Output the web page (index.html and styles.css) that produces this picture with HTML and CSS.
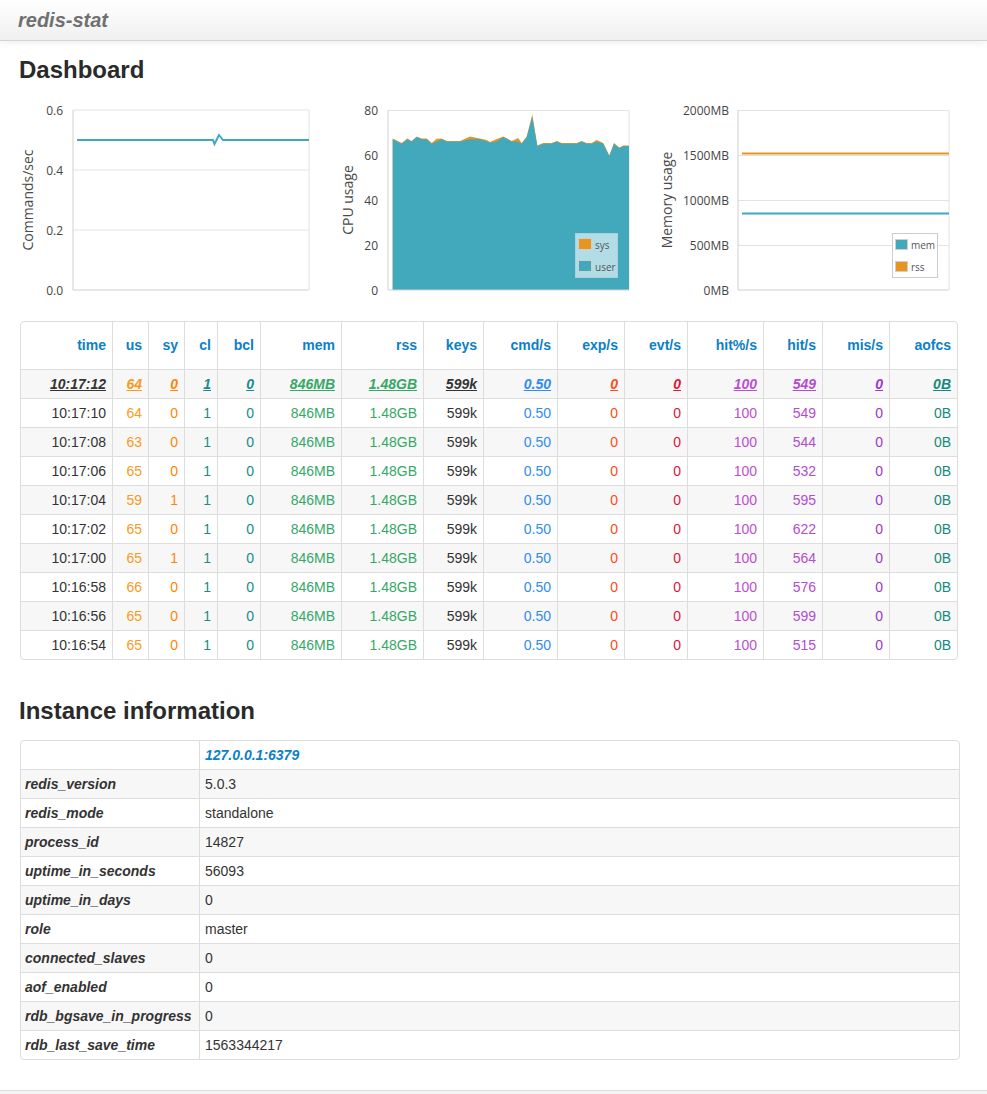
FILE: index.html
```html
<!DOCTYPE html>
<html lang="en">
<head>
<meta charset="utf-8">
<title>redis-stat</title>
<link rel="stylesheet" href="styles.css">
</head>
<body>
<header class="topbar">
  <span class="brand">redis-stat</span>
</header>

<main class="container">
  <h2 class="section-title">Dashboard</h2>

  <div class="charts">
    <svg class="chart chart-a" width="310" height="200" viewBox="20 96 310 200">
      <g class="grid">
        <line x1="73" y1="110" x2="309" y2="110"/>
        <line x1="73" y1="170" x2="309" y2="170"/>
        <line x1="73" y1="230" x2="309" y2="230"/>
        <line x1="309" y1="110" x2="309" y2="290"/>
      </g>
      <g class="axis">
        <line x1="73" y1="110" x2="73" y2="290"/>
        <line x1="73" y1="290" x2="309" y2="290"/>
      </g>
      <g class="ticks">
        <text x="63" y="110">0.6</text>
        <text x="63" y="170">0.4</text>
        <text x="63" y="230">0.2</text>
        <text x="63" y="290">0.0</text>
      </g>
      <text class="axis-title" transform="translate(33 200) rotate(-90)">Commands/sec</text>
      <polyline class="series-teal" points="77,140 213,140 214.5,144 219,135 223,140 309,140"/>
    </svg>

    <svg class="chart chart-b" width="320" height="200" viewBox="330 96 320 200">
      <g class="grid">
        <line x1="388" y1="110.5" x2="629" y2="110.5"/>
        <line x1="629" y1="110.5" x2="629" y2="290"/>
      </g>
      <polygon class="area-orange" points="392.7,138.6 401.7,143.1 407.3,138.6 411.7,140.9 416.7,136.4 421.7,138.6 426.7,138.6 431.7,143.1 436.7,138.7 441.7,138.6 446.7,140.9 460,140.9 470,136.5 480,138.6 486.7,140 490,142 496.7,139 503.3,136.4 511.7,140.9 518.3,138 521.7,143.1 526.7,136.4 532.3,114.6 537.3,145.4 543.3,143.1 551.7,143.1 556.7,140.9 561.7,143.1 576.7,143.1 581.7,140.9 586.7,143.1 591.7,143.1 596.7,140 603.3,143.1 609.3,155.5 614,143.1 619.3,147.6 623.3,145.4 629,145.4 629,290 392.7,290"/>
      <polygon class="area-teal" points="392.7,139.25 401.7,143.75 407.3,139.25 411.7,141.5 416.7,137 421.7,139.25 426.7,139.25 431.7,143.75 436.7,141.5 441.7,139.25 446.7,141.5 460,141.5 470,139.25 480,139.25 490,142.6 496.7,141.5 503.3,137 511.7,141.5 518.3,141.5 521.7,143.75 526.7,137 532.3,116.75 537.3,146 543.3,143.75 551.7,143.75 556.7,141.5 561.7,143.75 576.7,143.75 581.7,141.5 586.7,143.75 591.7,143.75 596.7,141.5 603.3,143.75 609.3,156.1 614,143.75 619.3,148.25 623.3,146 629,146 629,290 392.7,290"/>
      <g class="axis">
        <line x1="388" y1="110.5" x2="388" y2="290"/>
        <line x1="388" y1="290" x2="629" y2="290"/>
      </g>
      <g class="ticks">
        <text x="378" y="110.5">80</text>
        <text x="378" y="155.5">60</text>
        <text x="378" y="200.5">40</text>
        <text x="378" y="245">20</text>
        <text x="378" y="290">0</text>
      </g>
      <text class="axis-title" transform="translate(353 200) rotate(-90)">CPU usage</text>
      <g class="legend">
        <rect class="legend-box legend-box-tint" x="575.5" y="233.5" width="42" height="44"/>
        <rect class="swatch swatch-orange" x="578.5" y="238.5" width="13" height="11"/>
        <text x="595" y="244.5">sys</text>
        <rect class="swatch swatch-teal" x="578.5" y="260.5" width="13" height="11"/>
        <text x="595" y="266.5">user</text>
      </g>
    </svg>

    <svg class="chart chart-c" width="317" height="200" viewBox="650 96 317 200">
      <g class="grid">
        <line x1="738" y1="110.5" x2="949" y2="110.5"/>
        <line x1="738" y1="155.5" x2="949" y2="155.5"/>
        <line x1="738" y1="200.5" x2="949" y2="200.5"/>
        <line x1="738" y1="245.5" x2="949" y2="245.5"/>
        <line x1="949" y1="110.5" x2="949" y2="290"/>
      </g>
      <g class="axis">
        <line x1="738" y1="110.5" x2="738" y2="290"/>
        <line x1="738" y1="290" x2="949" y2="290"/>
      </g>
      <g class="ticks">
        <text x="729" y="110.5">2000MB</text>
        <text x="729" y="155.5">1500MB</text>
        <text x="729" y="200.5">1000MB</text>
        <text x="729" y="245.5">500MB</text>
        <text x="729" y="290">0MB</text>
      </g>
      <text class="axis-title" transform="translate(672 200) rotate(-90)">Memory usage</text>
      <line class="series-orange" x1="742" y1="153.5" x2="949" y2="153.5"/>
      <line class="series-teal" x1="742" y1="213.5" x2="949" y2="213.5"/>
      <g class="legend">
        <rect class="legend-box" x="892.5" y="233.5" width="45" height="44"/>
        <rect class="swatch swatch-teal" x="895.5" y="239.5" width="12" height="10"/>
        <text x="911" y="245">mem</text>
        <rect class="swatch swatch-orange" x="895.5" y="261.5" width="12" height="10"/>
        <text x="911" y="267">rss</text>
      </g>
    </svg>
  </div>

  <table class="grid-table stats">
    <colgroup>
      <col class="w-time"><col class="w-us"><col class="w-sy"><col class="w-cl"><col class="w-bcl">
      <col class="w-mem"><col class="w-rss"><col class="w-keys"><col class="w-cmd"><col class="w-exp">
      <col class="w-evt"><col class="w-hitp"><col class="w-hit"><col class="w-mis"><col class="w-aof">
    </colgroup>
    <thead>
      <tr>
        <th>time</th><th>us</th><th>sy</th><th>cl</th><th>bcl</th><th>mem</th><th>rss</th><th>keys</th>
        <th>cmd/s</th><th>exp/s</th><th>evt/s</th><th>hit%/s</th><th>hit/s</th><th>mis/s</th><th>aofcs</th>
      </tr>
    </thead>
    <tbody>
      <tr class="latest"><td>10:17:12</td><td>64</td><td>0</td><td>1</td><td>0</td><td>846MB</td><td>1.48GB</td><td>599k</td><td>0.50</td><td>0</td><td>0</td><td>100</td><td>549</td><td>0</td><td>0B</td></tr>
      <tr><td>10:17:10</td><td>64</td><td>0</td><td>1</td><td>0</td><td>846MB</td><td>1.48GB</td><td>599k</td><td>0.50</td><td>0</td><td>0</td><td>100</td><td>549</td><td>0</td><td>0B</td></tr>
      <tr><td>10:17:08</td><td>63</td><td>0</td><td>1</td><td>0</td><td>846MB</td><td>1.48GB</td><td>599k</td><td>0.50</td><td>0</td><td>0</td><td>100</td><td>544</td><td>0</td><td>0B</td></tr>
      <tr><td>10:17:06</td><td>65</td><td>0</td><td>1</td><td>0</td><td>846MB</td><td>1.48GB</td><td>599k</td><td>0.50</td><td>0</td><td>0</td><td>100</td><td>532</td><td>0</td><td>0B</td></tr>
      <tr><td>10:17:04</td><td>59</td><td>1</td><td>1</td><td>0</td><td>846MB</td><td>1.48GB</td><td>599k</td><td>0.50</td><td>0</td><td>0</td><td>100</td><td>595</td><td>0</td><td>0B</td></tr>
      <tr><td>10:17:02</td><td>65</td><td>0</td><td>1</td><td>0</td><td>846MB</td><td>1.48GB</td><td>599k</td><td>0.50</td><td>0</td><td>0</td><td>100</td><td>622</td><td>0</td><td>0B</td></tr>
      <tr><td>10:17:00</td><td>65</td><td>1</td><td>1</td><td>0</td><td>846MB</td><td>1.48GB</td><td>599k</td><td>0.50</td><td>0</td><td>0</td><td>100</td><td>564</td><td>0</td><td>0B</td></tr>
      <tr><td>10:16:58</td><td>66</td><td>0</td><td>1</td><td>0</td><td>846MB</td><td>1.48GB</td><td>599k</td><td>0.50</td><td>0</td><td>0</td><td>100</td><td>576</td><td>0</td><td>0B</td></tr>
      <tr><td>10:16:56</td><td>65</td><td>0</td><td>1</td><td>0</td><td>846MB</td><td>1.48GB</td><td>599k</td><td>0.50</td><td>0</td><td>0</td><td>100</td><td>599</td><td>0</td><td>0B</td></tr>
      <tr><td>10:16:54</td><td>65</td><td>0</td><td>1</td><td>0</td><td>846MB</td><td>1.48GB</td><td>599k</td><td>0.50</td><td>0</td><td>0</td><td>100</td><td>515</td><td>0</td><td>0B</td></tr>
    </tbody>
  </table>

  <h2 class="section-title section-title-info">Instance information</h2>

  <table class="grid-table info">
    <colgroup><col class="w-key"><col class="w-val"></colgroup>
    <thead>
      <tr><th></th><th class="host">127.0.0.1:6379</th></tr>
    </thead>
    <tbody>
      <tr><th>redis_version</th><td>5.0.3</td></tr>
      <tr><th>redis_mode</th><td>standalone</td></tr>
      <tr><th>process_id</th><td>14827</td></tr>
      <tr><th>uptime_in_seconds</th><td>56093</td></tr>
      <tr><th>uptime_in_days</th><td>0</td></tr>
      <tr><th>role</th><td>master</td></tr>
      <tr><th>connected_slaves</th><td>0</td></tr>
      <tr><th>aof_enabled</th><td>0</td></tr>
      <tr><th>rdb_bgsave_in_progress</th><td>0</td></tr>
      <tr><th>rdb_last_save_time</th><td>1563344217</td></tr>
    </tbody>
  </table>
</main>

<footer class="footer"></footer>
</body>
</html>
```

FILE: styles.css
```css
html, body {
  margin: 0;
  padding: 0;
  background: #ffffff;
}

body {
  font-family: "Liberation Sans", Arial, sans-serif;
  font-size: 14px;
  line-height: 20px;
  color: #333333;
  overflow: hidden;
}

.topbar {
  height: 40px;
  border-bottom: 1px solid #d4d4d4;
  background: linear-gradient(#ffffff, #f0f0f0);
  box-shadow: 0 1px 8px rgba(0, 0, 0, 0.08);
  display: flex;
  align-items: center;
  padding-left: 18px;
}

.brand {
  font-size: 20px;
  font-weight: bold;
  font-style: italic;
  color: #707070;
  line-height: 24px;
  margin-top: 0;
}

.container {
  padding: 0 20px;
}

.section-title {
  margin: 15px 0 0 -1px;
  font-size: 24px;
  line-height: 28px;
  font-weight: bold;
  color: #2a2a2a;
}

.section-title-info {
  margin-top: 37px;
}

/* charts */
.charts {
  display: flex;
  margin-top: 12px;
  height: 200px;
}

.chart {
  display: block;
  flex: none;
  overflow: visible;
}

.grid line {
  stroke: #e2e2e2;
  stroke-width: 1;
}

.axis line {
  stroke: #d0d0d0;
  stroke-width: 1;
}

.ticks text {
  font-family: "Open Sans", "Noto Sans", sans-serif;
  font-size: 12px;
  fill: #444444;
  text-anchor: end;
  dominant-baseline: central;
}

.axis-title {
  font-family: "Open Sans", "Noto Sans", sans-serif;
  font-size: 14px;
  fill: #4a4a4a;
  text-anchor: middle;
}

.series-teal {
  fill: none;
  stroke: #40a8be;
  stroke-width: 2;
}

.series-orange {
  fill: none;
  stroke: #e8951f;
  stroke-width: 2;
}

.area-teal {
  fill: #42a9bd;
}

.area-orange {
  fill: #e8951f;
}

.legend-box {
  fill: #ffffff;
  stroke: #cccccc;
  stroke-width: 1;
}

.legend-box-tint {
  fill: #b3dde6;
  stroke: #a8d3dc;
}

.swatch {
  stroke: #cfcfcf;
  stroke-width: 1;
}

.swatch-teal {
  fill: #42a9bd;
}

.swatch-orange {
  fill: #e8951f;
}

.legend text {
  font-family: "Open Sans", "Noto Sans", sans-serif;
  font-size: 10px;
  fill: #555555;
  dominant-baseline: central;
}

/* tables */
.grid-table {
  border-collapse: separate;
  border-spacing: 0;
  border: 1px solid #dddddd;
  border-radius: 4px;
  table-layout: fixed;
  box-sizing: border-box;
}

.grid-table th,
.grid-table td {
  box-sizing: border-box;
  line-height: 20px;
  white-space: nowrap;
  overflow: hidden;
}

.stats {
  width: 938px;
  margin-top: 25px;
}

.stats th,
.stats td {
  text-align: right;
  padding: 4px 6px;
  border-left: 1px solid #dddddd;
}

.stats th:first-child,
.stats td:first-child {
  border-left: 0;
}

.stats thead th {
  padding: 13px 6px 14px;
  font-weight: bold;
  color: #0a80c8;
}

.stats td {
  border-top: 1px solid #dddddd;
}

.grid-table tbody tr:nth-child(odd) > * {
  background: #f7f7f7;
}

.w-time { width: 91px; }
.w-us { width: 36px; }
.w-sy { width: 36px; }
.w-cl { width: 33px; }
.w-bcl { width: 43px; }
.w-mem { width: 81px; }
.w-rss { width: 82px; }
.w-keys { width: 60px; }
.w-cmd { width: 74px; }
.w-exp { width: 67px; }
.w-evt { width: 63px; }
.w-hitp { width: 76px; }
.w-hit { width: 59px; }
.w-mis { width: 67px; }
.w-aof { width: 68px; }

.stats td:nth-child(1) { color: #333333; }
.stats td:nth-child(2) { color: #f99a1c; }
.stats td:nth-child(3) { color: #ff8500; }
.stats td:nth-child(4) { color: #1a8a8a; }
.stats td:nth-child(5) { color: #148c8c; }
.stats td:nth-child(6) { color: #35a867; }
.stats td:nth-child(7) { color: #35a867; }
.stats td:nth-child(8) { color: #333333; }
.stats td:nth-child(9) { color: #2f8cf2; }
.stats td:nth-child(10) { color: #ff4b14; }
.stats td:nth-child(11) { color: #e0143c; }
.stats td:nth-child(12) { color: #bb4fd0; }
.stats td:nth-child(13) { color: #b34ccf; }
.stats td:nth-child(14) { color: #9a36cc; }
.stats td:nth-child(15) { color: #16897c; }

.stats tr.latest td {
  font-weight: bold;
  font-style: italic;
  text-decoration: underline;
}

.info {
  width: 940px;
  margin-top: 15px;
}

.w-key { width: 178px; }
.w-val { width: 760px; }

.info th,
.info td {
  text-align: left;
  padding: 4px 5px;
}

.info thead th {
  padding: 4px 5px;
}

.info tbody th,
.info tbody td {
  border-top: 1px solid #dddddd;
}

.info th:first-child {
  padding-left: 4px;
  font-weight: bold;
  font-style: italic;
  color: #333333;
}

.info th + th,
.info td {
  border-left: 1px solid #dddddd;
}

.info td {
  font-weight: normal;
  color: #333333;
}

.info .host {
  font-weight: bold;
  font-style: italic;
  color: #0a80c8;
}

.footer {
  margin-top: 30px;
  height: 40px;
  background: #f5f5f5;
  border-top: 1px solid #dddddd;
}
```
